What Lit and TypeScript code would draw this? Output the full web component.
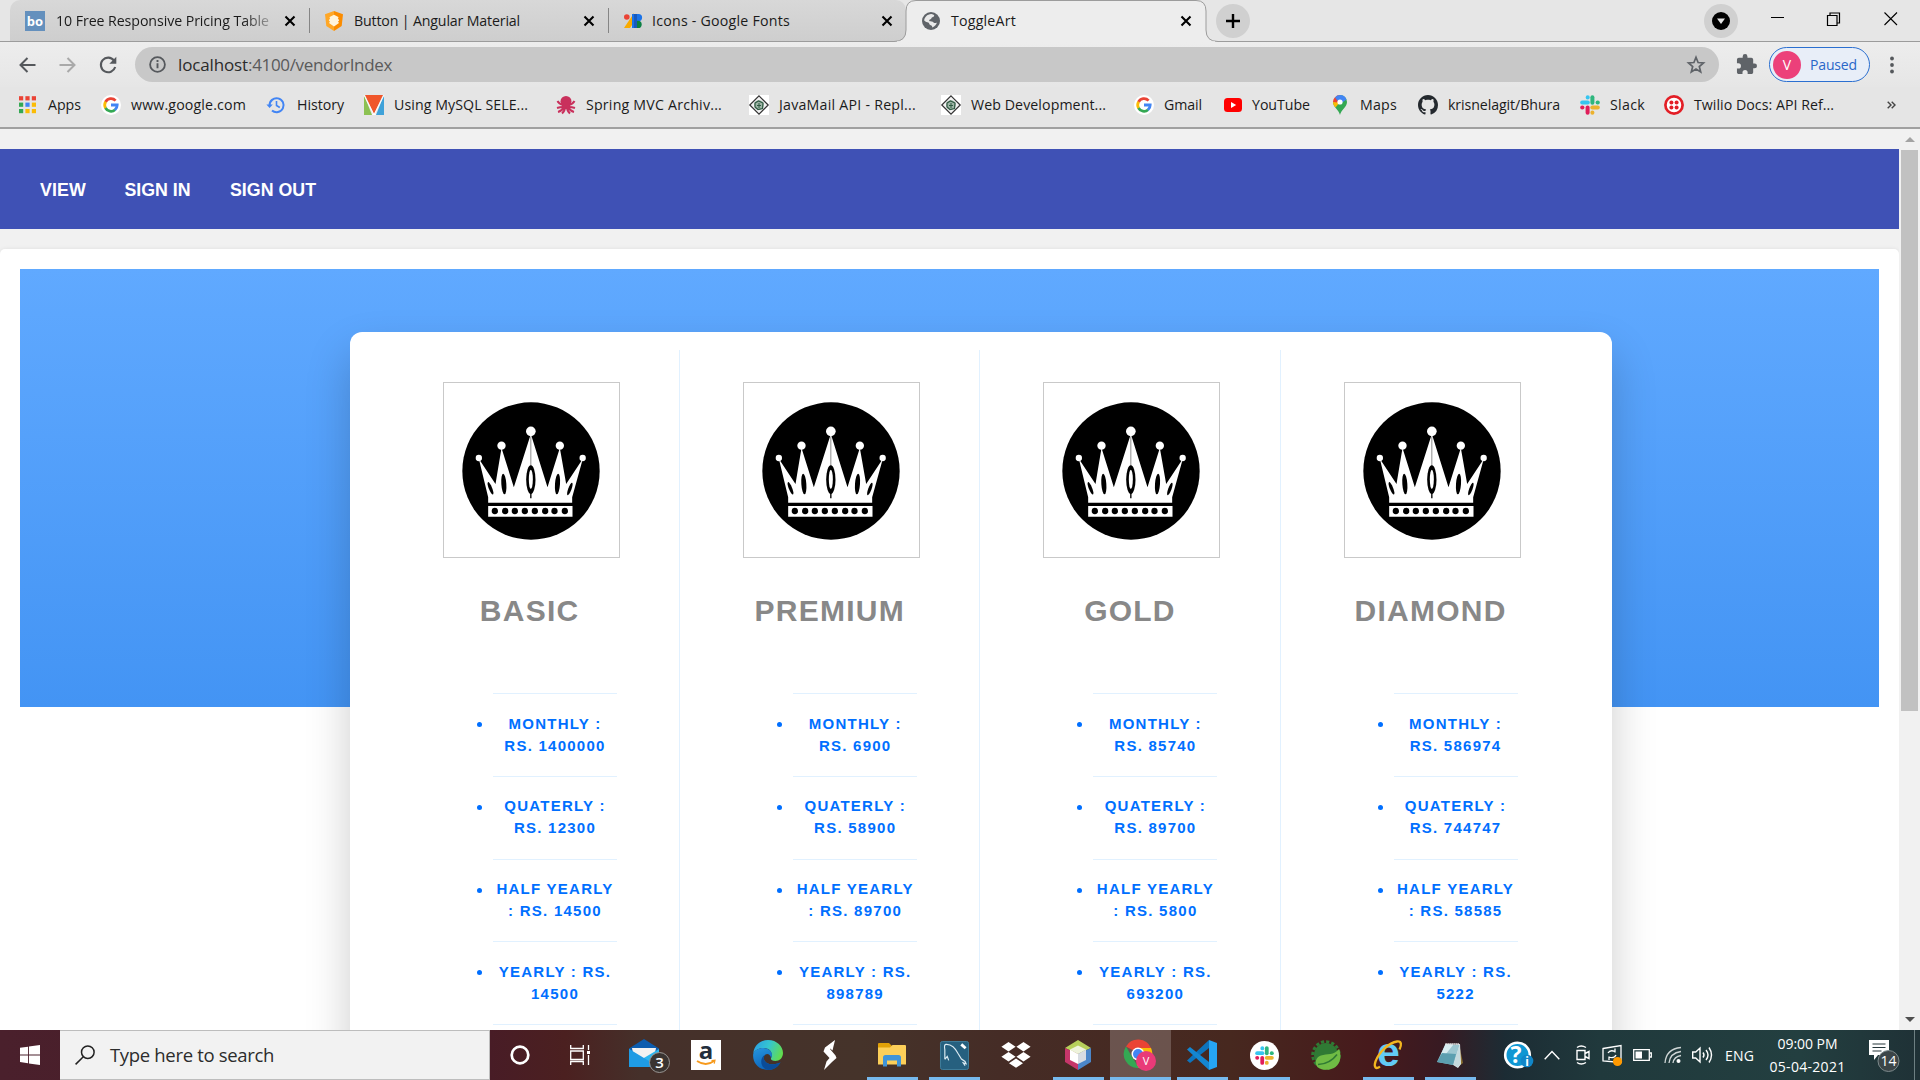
import { LitElement, html, svg, css, TemplateResult } from "lit";
import { customElement } from "lit/decorators.js";
import { styleMap } from "lit/directives/style-map.js";

interface Cell {
  x: number;
  body: TemplateResult;
  cls?: string;
}

interface Plan {
  name: string;
  monthly: string;
  quarterly: string;
  half: string;
  yearly: string;
}

const plans: Plan[] = [
  { name: "BASIC", monthly: "1400000", quarterly: "12300", half: "14500", yearly: "14500" },
  { name: "PREMIUM", monthly: "6900", quarterly: "58900", half: "89700", yearly: "898789" },
  { name: "GOLD", monthly: "85740", quarterly: "89700", half: "5800", yearly: "693200" },
  { name: "DIAMOND", monthly: "586974", quarterly: "744747", half: "58585", yearly: "5222" },
];

const icon = (w: number, h: number, box: string, body: TemplateResult) =>
  html`<svg class="icon" width=${w} height=${h} viewBox=${box}>${body}</svg>`;

/* A label whose tracking is adjusted so that it spans exactly w pixels. */
const label = (text: string, w: number, cls = "") =>
  html`<span class="fit ${cls}" data-w=${w}>${text}</span>`;

/* Lays cells out one after the other; each one is as wide as the distance to the next. */
const row = (cells: Cell[], end: number) =>
  cells.map((c, i) => {
    const next = i + 1 < cells.length ? cells[i + 1].x : end;
    return html`<div class="cell ${c.cls ?? ""}" style=${styleMap({ width: `${next - c.x}px` })}>${c.body}</div>`;
  });

const googleG = icon(20, 20, "0 0 20 20", svg`
  <circle cx="10" cy="10" r="10" fill="#fff"/>
  <g fill="none" stroke-width="2.800">
    <path d="M14.600 5.600A6.300 6.300 0 0 0 4.500 7" stroke="#ea4335"/>
    <path d="M4.600 6.800a6.300 6.300 0 0 0 0 6.400" stroke="#fbbc05"/>
    <path d="M4.500 13a6.300 6.300 0 0 0 9.600 1.800" stroke="#34a853"/>
    <path d="M13.900 14.900A6.300 6.300 0 0 0 16.200 10H10" stroke="#4285f4"/>
  </g>`);

const bo = icon(20, 20, "0 0 20 20", svg`
  <rect width="20" height="20" fill="#6490bd"/>
  <text x="10" y="15" text-anchor="middle" font-family="Open Sans, sans-serif" font-weight="700" font-size="13" fill="#fff">bo</text>`);

const angular = icon(20, 20, "0 0 20 20", svg`
  <path d="M10 0 1 3.200 2.300 15 10 20z" fill="#ffa726"/><path d="M10 0l9 3.200L17.700 15 10 20z" fill="#fb8c00"/>
  <path d="M10 3.800l4.800 2.400-1 .9 1.400 2.400-1.200 1.100 1 1.500-5 3.400-5-3.400 1-1.500-1.200-1.100 1.400-2.400-1-.9z" fill="#fff4dc"/>`);

const fonts = icon(20, 20, "0 0 20 20", svg`
  <path d="M11 2 1 17h6l4-6z" fill="#f9ab00"/><path d="M9 3h5v14H9z" fill="#1a73e8"/>
  <circle cx="3.800" cy="6" r="2.800" fill="#ea4335"/>
  <path d="M13 3h2.500a3.600 3.600 0 0 1 0 7.200H13z" fill="#1a73e8"/><circle cx="15" cy="13.400" r="3.700" fill="#0d8043"/>
  <path d="M11 3h3v14h-3z" fill="#185abc"/>`);

const globe = icon(20, 20, "0 0 20 20", svg`
  <circle cx="10" cy="10" r="9" fill="#5f6368"/>
  <path d="M10.400 3.100c2.700.4 3.400 1.500 2.400 2.500-1 1-2.200.6-2.500 1.800-.2 1.200-1.300.5-2 1.600-.6 1.200.8 1.400 2.300 1.400 1.900 0 1.800 1.200 2.800 1.600 1 .4 1.600-.6 2.400-.2-.3 1.600-1.800 3.800-4.600 4.700.3-1.600-.7-1.800-1.900-2.400-1.300-.7-.8-2.200-2-2.600C6 11 5 11.400 3.200 9.500 3.400 6.500 6 3.400 10.400 3.100z" fill="#e9e9e9"/>`);

const cross = icon(12, 12, "0 0 12 12", svg`<path d="M1.500 1.500l9 9m0-9l-9 9" stroke="#000" stroke-width="2.100"/>`);

const apps = icon(18, 18, "0 0 18 18", svg`${[0, 1, 2, 3, 4, 5, 6, 7, 8].map((i) => {
  const colors = ["#ea4335", "#ea4335", "#ea4335", "#34a853", "#4285f4", "#fbbc05", "#34a853", "#fbbc05", "#fbbc05"];
  return svg`<rect x=${(i % 3) * 6.4} y=${Math.floor(i / 3) * 6.4 + 0.2} width="4.200" height="4.200" fill=${colors[i]}/>`;
})}`);

const history = icon(20, 20, "0 0 20 20", svg`
  <path d="M3.600 10.500A7 7 0 1 1 6 15.500" fill="none" stroke="#4285f4" stroke-width="2"/>
  <path d="M.4 9.500h6.400l-3.200 3.600z" fill="#4285f4"/><path d="M10.500 6v4.500l3.300 2" fill="none" stroke="#4285f4" stroke-width="1.600"/>`);

const vlogo = icon(20, 20, "0 0 20 20", svg`
  <path d="M0 0l8 20H0z" fill="#8cc152"/><path d="M20 0l-8 20h8z" fill="#3fa2d9"/>
  <path d="M8 20h4l-2-4z" fill="#fff"/><path d="M1 0h18l-9 19z" fill="#f0562b"/><path d="M0 0l10 20L20 0" stroke="#fff" fill="none"/>`);

const octopus = icon(20, 20, "0 0 20 20", svg`
  <ellipse cx="10" cy="6.500" rx="5.500" ry="5.500" fill="#c9305c"/><path d="M6 8h8v6H6z" fill="#c9305c"/>
  <g stroke="#c9305c" stroke-width="2" fill="none">
  <path d="M7 10Q3 9 1.500 6M13 10q4-1 5.500-4M7 12q-3 0-6 1M13 12q3 0 6 1M8 12q-2 4-6 5M12 12q2 4 6 5M9 12q0 4-3 6.500M11 12q0 4 3 6.500"/></g>`);

const diamond = icon(20, 20, "0 0 20 20", svg`
  <rect width="20" height="20" fill="#fff"/><path d="M10 .8L19.200 10 10 19.200.8 10z" fill="#f4f4f4" stroke="#333" stroke-width="1.200"/>
  <circle cx="10" cy="10" r="4.800" fill="#9db5a6"/><path d="M6 8l3.500-2 4.500 2-.5 5.500-4.500 1L6 12z" fill="none" stroke="#2f5a42" stroke-width="1.200"/><path d="M8 10.500h4M10 8v5" stroke="#2f5a42"/>`);

const youtube = icon(20, 20, "0 0 20 20", svg`<rect x="1" y="3" width="18" height="14" rx="3.500" fill="#f00"/><path d="M8 7l5.200 3L8 13z" fill="#fff"/>`);

const maps = icon(16, 20, "0 0 16 20", svg`
  <path d="M8 20C7 15 1 12 1 7l7-7a7 7 0 0 1 7 7c0 5-6 8-7 13z" fill="#34a853"/>
  <path d="M1 7.500 3 2.500 8 7 3.500 12.500Q1 10 1 7.500z" fill="#fbbc04"/>
  <path d="M2.800 2.400A7 7 0 0 1 8 0L5.500 7.500 1 7Q1 4 2.800 2.400z" fill="#ea4335"/>
  <path d="M8 0a7 7 0 0 1 6.500 4.400L8 9 3 2.400Q5 0 8 0z" fill="#4285f4"/><circle cx="8" cy="7" r="2.600" fill="#fff"/>`);

const github = icon(20, 20, "0 0 16 16", svg`
  <path fill="#24292e" d="M8 0C3.580 0 0 3.580 0 8c0 3.540 2.290 6.530 5.470 7.590.4.070.55-.17.55-.38 0-.19-.01-.82-.01-1.490-2.010.37-2.530-.49-2.690-.94-.09-.23-.48-.94-.82-1.130-.28-.15-.68-.52-.01-.53.63-.01 1.080.58 1.230.82.72 1.210 1.870.87 2.330.66.07-.52.28-.87.51-1.070-1.780-.2-3.640-.89-3.640-3.950 0-.87.31-1.590.82-2.150-.08-.2-.36-1.020.08-2.120 0 0 .67-.21 2.200.82.64-.18 1.320-.27 2-.27s1.360.09 2 .27c1.530-1.040 2.200-.82 2.200-.82.44 1.100.16 1.920.08 2.120.51.56.82 1.270.82 2.150 0 3.070-1.870 3.750-3.650 3.950.29.25.54.73.54 1.480 0 1.070-.01 1.930-.01 2.200 0 .21.15.46.55.38A8.010 8.010 0 0 0 16 8c0-4.420-3.580-8-8-8z"/>`);

const slackShape = svg`
  <g stroke-width="4" stroke-linecap="round" fill="none">
    <path d="M2.200 7.500h5.600" stroke="#36c5f0"/><path d="M7.700 2.200v.3" stroke="#36c5f0"/>
    <path d="M12.400 2.200v5.500" stroke="#2eb67d"/><path d="M17.600 7.600h.2" stroke="#2eb67d"/>
    <path d="M12.300 12.400h5.500" stroke="#ecb22e"/><path d="M12.400 17.600v.2" stroke="#ecb22e"/>
    <path d="M7.600 12.400v5.400" stroke="#e01e5a"/><path d="M2.200 12.400h.2" stroke="#e01e5a"/>
  </g>`;
const slack = icon(20, 20, "0 0 20 20", slackShape);

const twilio = icon(20, 20, "0 0 20 20", svg`
  <circle cx="10" cy="10" r="8.600" fill="#fff" stroke="#e31e26" stroke-width="2.700"/>
  <g fill="#e31e26"><circle cx="7.400" cy="7.400" r="2"/><circle cx="12.600" cy="7.400" r="2"/><circle cx="7.400" cy="12.600" r="2"/><circle cx="12.600" cy="12.600" r="2"/></g>`);

const crown = html`<svg class="crown" viewBox="313 189 524 522">
  <circle cx="573.500" cy="453" r="206"/>
  <g fill="#fff">
    <circle cx="573" cy="334" r="14.500"/><circle cx="485" cy="377" r="12.500"/><circle cx="660" cy="377" r="12.500"/>
    <circle cx="417" cy="414" r="9.500"/><circle cx="728.500" cy="414" r="9.500"/>
    <path d="M445 548v-16L417 416l50 76 18-108 37 118 51-160 50 160 37-118 19 108 50-76-32 116v16z"/>
    <path d="M445 558h253v32H445z"/>
  </g>
  ${[465, 496, 525, 555, 585, 616, 644, 675].map((x) => svg`<circle cx=${x} cy="573" r="9.500"/>`)}
  <path d="M573 350v90" stroke="#555" stroke-width="2"/><path d="M573 515v20" stroke="#000" stroke-width="4"/>
  <ellipse cx="573" cy="479" rx="14" ry="43"/><ellipse cx="573" cy="478" rx="6" ry="29" fill="#fff"/>
  <ellipse cx="492" cy="492" rx="7.500" ry="31" transform="rotate(-4 492 492)"/>
  <ellipse cx="653" cy="492" rx="7.500" ry="31" transform="rotate(4 653 492)"/>
  <ellipse cx="452" cy="505" rx="5" ry="20" transform="rotate(-22 452 505)"/>
  <ellipse cx="690" cy="507" rx="5" ry="20" transform="rotate(20 690 507)"/>
</svg>`;

/* Taskbar icons */
const mail = icon(42, 34, "0 0 42 34", svg`
  <path d="M0 10.500 15 1l15 9.500V17H0z" fill="#0c5cae"/><path d="M3 10h24l-2 10H5z" fill="#f2f2f2"/>
  <path d="M0 11l14 9.500 16-9.500v18H0z" fill="#2bb6f0"/><path d="M0 11l30 18H0z" fill="#1f9be4"/>
  <circle cx="30.500" cy="24.500" r="10" fill="#3a3431" stroke="#9a9794"/>
  <text x="30.500" y="30" text-anchor="middle" font-size="15" font-weight="600" font-family="Open Sans, sans-serif" fill="#fff">3</text>`);
const amazon = icon(30, 30, "0 0 30 30", svg`
  <rect width="30" height="30" fill="#fff"/>
  <text x="15" y="19" text-anchor="middle" font-size="24" font-weight="700" font-family="Open Sans, sans-serif" fill="#232f3e">a</text>
  <path d="M6 21q9 6 17 0" fill="none" stroke="#f79a1c" stroke-width="1.800"/><path d="M20.500 20.700l3.500-.4-.8 3.400" fill="none" stroke="#f79a1c" stroke-width="1.200"/>`);
const edge = icon(30, 30, "0 0 30 30", svg`
  <defs>
    <linearGradient id="eg" x1="0" x2="1" y1=".2" y2=".5"><stop offset="0" stop-color="#2a9fe6"/><stop offset=".5" stop-color="#35c6cf"/><stop offset="1" stop-color="#62dc4f"/></linearGradient>
    <linearGradient id="eb" x1="0" x2=".5" y1="0" y2="1"><stop offset="0" stop-color="#2596e0"/><stop offset="1" stop-color="#0c62b8"/></linearGradient>
  </defs>
  <path d="M.3 13.500C1 5 7.500 0 15 0c9 0 15 6.500 15 13 0 5-3.600 8-7.500 8-3.600 0-5.300-1.300-4.400-3C20.500 12 16 8 10.500 8 5.500 8 1.500 10.500.3 13.500z" fill="url(#eg)"/>
  <path d="M.2 14C1 10.500 5.500 8 10.500 8 15 8 19 11 19 15c0 1.200-.4 2.400-1 3-.6-3.600-3.500-4.800-5.500-3.500-3 2-2.500 8.500 5.500 9.700 3 .4 6-.2 9.500-1.700A15 15 0 0 1 15 30C6 30-.8 23 .2 14z" fill="url(#eb)"/>
  <path d="M12.500 14.500c-3 2-2.500 8.500 5.500 9.700 3 .4 6-.2 9.500-1.700-2.500 4.500-7 7.500-12.500 7.500-8-2-9-12-2.500-15.500z" fill="#0b4c98"/>`);
const sIcon = icon(14, 30, "0 0 14 30", svg`<path fill="#fff" d="M12 0L9.500 10.500 6 7.500z"/><path fill="#fff" d="M12 0L2 7.500.5 11.500l6 6.500-3 3.500L1 30l8-8 4.500-4-1-2.500L7 9z"/>`);
const explorer = icon(28, 24, "0 0 28 24", svg`
  <path d="M0 1q0-1 1-1h10l3 3v4H0z" fill="#e0a008"/><path d="M0 4.500l12 0 2.500-2.500H27q1 0 1 1v18.500H0z" fill="#fccf59"/>
  <path d="M5 23.500V14.500q0-2.500 2.500-2.500h13q2.500 0 2.500 2.500v9h-4v-6H9v6z" fill="#3f94d8"/>`);
const mysql = icon(29, 29, "0 0 30 30", svg`
  <rect x=".5" y=".5" width="29" height="29" rx="2" fill="#26607f" stroke="#3f7f9e"/>
  <path d="M5 19V9Q4 4 6 3.500c6-.5 10 4 13 10l3 5q4 2 5 5l-3-1 2 3M5 19l2.500-3 1.500 4" fill="none" stroke="#dcebf2" stroke-width="1.200"/><path d="M22 3.500l4.500 4" stroke="#fff" stroke-width="3"/>`);
const dropbox = icon(30, 26, "0 0 30 26", svg`<path fill="#fff" d="M7.500 0L14.600 4.700 7.500 9.400.4 4.700zM22.500 0l7.100 4.700-7.100 4.700-7.100-4.700zM7.500 10l7.100 4.700-7.100 4.700-7.100-4.700zM22.500 10l7.100 4.700-7.100 4.700-7.100-4.700zM15 16.500l7 4.700-7 4.600-7-4.600z"/>`);
const netbeans = icon(28, 30, "0 0 28 30", svg`
  <path d="M14 0l13 8-13 6L1 8z" fill="#b6cf5b"/><path d="M1 8l13 6v16L1 22z" fill="#c6366a"/><path d="M27 8l-13 6v16l13-8z" fill="#4b86c9"/>
  <path d="M14 5.500l8 4-8 4.500-8-4.500z" fill="#eef3dc"/><path d="M6 9.500l8 4.500v10l-8-4z" fill="#fff"/><path d="M22 9.500L14 14v10l8-4z" fill="#d8dce2"/>`);
const chrome = icon(32, 32, "0 0 32 32", svg`
  <path d="M14 14L2 7.500A14 14 0 0 1 27 9H14z" fill="#ea4335"/><path d="M14 14H28A14 14 0 0 1 13 29z" fill="#fbbc05"/><path d="M27 9H14v8l14 3q1-7-1-11z" fill="#fbbc05"/>
  <path d="M2 7.500l7 12 6 9.500A14 14 0 0 1 2 7.500z" fill="#34a853"/>
  <circle cx="14" cy="15" r="6.500" fill="#fff"/><circle cx="14" cy="15" r="5" fill="#4285f4"/>
  <circle cx="22" cy="22" r="10" fill="#e93a78"/><text x="22" y="26" font-size="11" text-anchor="middle" font-family="Open Sans, sans-serif" fill="#fff">V</text>`);
const vscode = icon(30, 30, "0 0 30 30", svg`
  <path d="M22 0l8 3v24l-8 3z" fill="#26a5f3"/><path d="M22 0v8L3 23 0 20.500z" fill="#0d74bd"/><path d="M22 30v-8L3 7 0 9.500z" fill="#1486d1"/>`);
const slackApp = icon(29, 29, "-5 -5 30 30", svg`<circle cx="10" cy="10" r="15" fill="#fff"/><g transform="translate(.2 .2) scale(.98)">${slackShape}</g>`);
const leaf = icon(30, 30, "0 0 30 30", svg`
  <circle cx="15" cy="15" r="12" fill="#2f7a34"/><circle cx="15" cy="15" r="13.300" fill="none" stroke="#2f7a34" stroke-width="3" stroke-dasharray="3.200 2"/>
  <path d="M28 9c2.500 6 2 14-3.500 18-5 3.500-13 4-18 0C3 23 5 17 10 15.500c6-2 13 0 18-6.500z" fill="#6fbb44"/><path d="M7 24.500q12-.5 19-10" stroke="#2f7a34" fill="none" stroke-width="1.600"/>`);
const ie = icon(30, 30, "0 0 30 30", svg`
  <text x="15.500" y="26" text-anchor="middle" font-family="Liberation Sans, Arial, sans-serif" font-weight="700" font-size="41" fill="#62cbf5">e</text>
  <path d="M7 26.500C3 30 .5 27 2.500 21.500 6 12 16 2.500 24 1.500c5-.6 4.500 4 2.500 8" fill="none" stroke="#f3b61f" stroke-width="2.300"/>`);
const notepad = icon(28, 28, "0 0 28 28", svg`
  <path d="M23 3l4 19-4 3z" fill="#8a6d2f"/><path d="M18 4l6-1 1 20-3 4-8-5z" fill="#e3ecee"/>
  <path d="M9.500 3l14 1-6 20L1 21z" fill="#9cc6d0"/><path d="M9.500 3l8 .6-8 10L5 13z" fill="#d8edf1"/><path d="M6 12l14 1-3 11L1 21z" fill="#5c9fb0"/>
  <path d="M23.500 4l1 19-3 3.500-4-3z" fill="#c5dade"/><path d="M9.500 3h14" stroke="#e8e8e8" stroke-width="2" stroke-dasharray="1.200 .8"/>`);
const help = icon(30, 30, "0 0 30 30", svg`
  <circle cx="13.500" cy="15" r="12.300" fill="#0f97d3" stroke="#fff" stroke-width="2.600"/>
  <text x="12" y="23" text-anchor="middle" font-family="Open Sans, sans-serif" font-weight="700" font-size="23" fill="#fff">?</text>
  <circle cx="23" cy="21" r="6.300" fill="#1186c8"/><text x="23" y="25.500" text-anchor="middle" font-family="Open Sans, sans-serif" font-weight="700" font-size="12" fill="#fff">i</text>`);

const ring = icon(20, 20, "0 0 20 20", svg`<circle cx="10" cy="10" r="8.300" fill="none" stroke="#fff" stroke-width="2.700"/>`);
const taskview = icon(20, 20, "0 0 20 20", svg`<g fill="none" stroke="#fff" stroke-width="1.300"><path d="M.7 0v3.500h12.600V0M.7 6h12.600v8.500H.7zM.7 20v-3.500h12.600V20M18.500 0v5M18.500 10v10"/></g><path d="M17 6h3v3h-3z" fill="#fff"/>`);
const winlogo = icon(20, 20, "0 0 20 20", svg`<path fill="#fff" d="M0 2.800L8 1.700v7.700H0zM8.900 1.500L20 0v9.400H8.900zM0 10.400h8v7.800l-8-1.100zM8.900 10.400H20V20L8.900 18.400z"/>`);
const magnifier = icon(20, 20, "0 0 20 20", svg`<g fill="none" stroke="#222" stroke-width="1.500"><circle cx="12.800" cy="7.200" r="6.300"/><path d="M8.300 11.700L.6 19.400"/></g>`);
const line = (w: number, h: number, d: string) => icon(w, h, `0 0 ${w} ${h}`, svg`<path d=${d} fill="none" stroke="#fff" stroke-width="1.400"/>`);

@customElement("app-root")
export class AppRoot extends LitElement {
  static styles = css`
    :host { display: block; width: 1920px; height: 1080px; overflow: hidden; font-family: "Open Sans", "Noto Sans", sans-serif; color: #1b1b1b; }
    * { box-sizing: border-box; }
    .screen { display: flex; flex-direction: column; height: 1080px; }
    .icon { display: block; flex: none; overflow: visible; }
    .fit { display: inline-block; white-space: pre; }
    .cell { display: flex; align-items: center; flex: none; height: 100%; }
    .top { height: 129px; border-bottom: 2px solid #a0a0a0; background: #e5e5e5; flex: none; }
    .tabs { height: 42px; display: flex; background: #e6e6e6; border-bottom: 1px solid #9c9c9c; font-size: 14.200px; position: relative; z-index: 0; }
    .tabs .cell { height: 41px; }
    .tab { background: linear-gradient(#d8d8d8, #cecece); }
    .first { border-radius: 10px 0 0 0; }
    .last { border-radius: 0 10px 0 0; }
    .sep { border-left: 1px solid #858585; height: 25px; width: 1px; }
    .active { position: relative; }
    .shape { position: absolute; left: -12px; top: 0; }
    .front { position: relative; }
    .round { width: 34px; height: 34px; border-radius: 50%; background: #d0d0d0; display: grid; place-items: center; }
    .fade { -webkit-mask-image: linear-gradient(90deg, #000 88%, rgba(0, 0, 0, .3)); mask-image: linear-gradient(90deg, #000 88%, rgba(0, 0, 0, .3)); }
    .tools { height: 45px; display: flex; background: linear-gradient(#ededed, #e6e6e6); }
    .omni { height: 35px; margin-top: 5px; width: 1584px; border-radius: 18px; background: #c8c8c8; display: flex; align-items: center; font-size: 17px; color: #5a5a5a; padding-left: 14px; }
    .omni .host { color: #2b2b2b; }
    .url { display: flex; margin-left: 12px; flex: 1; }
    .pill { height: 35px; width: 101px; border: 1.500px solid #2b6fd0; border-radius: 18px; background: #e8eef8; display: flex; align-items: center; padding-left: 3px; font-size: 14px; color: #2a66c8; gap: 9px; }
    .avatar { width: 28px; height: 28px; border-radius: 50%; background: #ec407a; color: #fff; display: grid; place-items: center; font-size: 14px; }
    .marks { height: 40px; display: flex; font-size: 14.200px; padding-bottom: 4px; }
    .marks .fit { margin-top: -2px; }
    .view { height: 901px; flex: none; display: flex; overflow: hidden; }
    .page { width: 1899px; background: #f1f1f1; font-family: "Liberation Sans", Arial, sans-serif; padding-top: 20px; flex: none; }
    .nav { height: 80px; background: #3f51b5; display: flex; color: #fff; font-weight: 700; font-size: 17.800px; padding: 2px 0 0 40px; }
    .sheet { margin-top: 20px; height: 900px; background: #fff; border-radius: 5px; padding: 20px; box-shadow: 0 0 4px rgba(0, 0, 0, .08); }
    .hero { height: 438px; background: linear-gradient(#60a9ff, #4394f4); padding: 63px 0 0 330px; }
    .card { width: 1262px; height: 900px; border-radius: 12px; background: #fff; box-shadow: 0 22px 46px rgba(0, 0, 0, .2); padding: 18px 30px; display: flex; }
    .plan { flex: 0 0 300.200px; border-right: 1px solid #e1f1ff; display: flex; flex-direction: column; }
    .plan:last-child { border-right: 0; }
    .frame { margin: 32px 0 0 63px; width: 177px; height: 176px; border: 1px solid #c9c9c9; flex: none; }
    .crown { display: block; width: 175px; height: 174px; }
    .title { margin: 34px 0 0; height: 38px; line-height: 38px; text-align: center; font-size: 30px; font-weight: 700; letter-spacing: 1.250px; color: #888; }
    .list { margin: 63px 0 0 113px; padding: 0; width: 124px; border-top: 1px solid #e1f1ff; }
    .price { height: 82.750px; border-bottom: 1px solid #e1f1ff; padding-top: 18.500px; font-size: 15px; line-height: 22px; font-weight: 700; letter-spacing: 1.250px; text-align: center; color: #006fff; position: relative; list-style: none; }
    .price::before { content: ""; position: absolute; left: -16px; top: 28px; width: 5px; height: 5px; border-radius: 50%; background: #006fff; }
    .scroll { width: 21px; background: #f1f1f1; display: flex; flex-direction: column; align-items: center; justify-content: space-between; }
    .thumb { width: 17px; height: 561px; background: #c1c1c1; }
    .scroll .gap { flex: 1; }
    .up { height: 21px; display: grid; place-items: center; }
    .task { height: 50px; flex: none; display: flex; color: #fff;
      background: linear-gradient(90deg, #4a202c 0, #481c26 490px, #4b2020 565px, #45302a 640px, #45332a 860px, #452c26 1000px, #47281f 1230px, #471a1c 1370px, #381a22 1440px, #1c2c34 1505px, #20393c 1600px, #233f40 1800px, #1f3136 1920px); }
    .search { background: #f2f2f2; border: 1px solid #bdbdbd; border-width: 1px 1px 1px 0; color: #2c2c2c; font-size: 18.500px; padding-left: 15px; gap: 15px; }
    .search .fit { margin-top: -2px; }
    .app { justify-content: center; border-bottom: 3px solid transparent; padding: 3px 1px 0 0; }
    .run { border-bottom-color: #76b9ed; }
    .hot { background-color: rgba(255, 255, 255, .2); }
    .clock { flex-direction: column; justify-content: center; font-size: 14px; line-height: 23px; }
    .tray { font-size: 14px; }
    .edge { border-left: 1px solid #6d7f82; }
  `;

  protected firstUpdated() {
    this.renderRoot.querySelectorAll<HTMLElement>(".fit").forEach((el) => {
      const target = Number(el.dataset.w);
      const natural = el.getBoundingClientRect().width;
      el.style.letterSpacing = `${(target - natural) / (el.textContent ?? " ").length}px`;
    });
  }

  private tabs() {
    const t = "tab";
    return html`<div class="tabs">${row([
      { x: 0, body: html`` },
      { x: 10, cls: "tab first", body: html`` },
      { x: 25, cls: t, body: bo },
      { x: 56, cls: t, body: label("10 Free Responsive Pricing Table", 213, "fade") },
      { x: 284, cls: t, body: cross },
      { x: 309, cls: t, body: html`<div class="sep"></div>` },
      { x: 324, cls: t, body: angular },
      { x: 354, cls: t, body: label("Button | Angular Material", 166) },
      { x: 583, cls: t, body: cross },
      { x: 608, cls: t, body: html`<div class="sep"></div>` },
      { x: 623, cls: t, body: fonts },
      { x: 652, cls: t, body: label("Icons - Google Fonts", 138) },
      { x: 881, cls: "tab last", body: cross },
      { x: 906, cls: "active", body: html`<svg class="shape" width="324" height="42"><path d="M0 42.500V41.500Q12 41.500 12 30V11Q12 .5 22 .5H302Q312 .5 312 11V30Q312 41.500 324 41.500V43z" fill="#ededed" stroke="#9c9c9c"/><path d="M3 42h318" stroke="#ededed" stroke-width="1.500"/></svg>` },
      { x: 921, cls: "front", body: globe },
      { x: 951, cls: "front", body: label("ToggleArt", 65) },
      { x: 1180, cls: "front", body: cross },
      { x: 1216, cls: "front", body: html`<div class="round">${icon(16, 16, "0 0 16 16", svg`<path d="M8 1v14M1 8h14" stroke="#000" stroke-width="2.400"/>`)}</div>` },
      { x: 1704, body: html`<div class="round">${icon(18, 18, "0 0 18 18", svg`<circle cx="9" cy="9" r="9"/><path d="M5 6.500h8L9 12z" fill="#e6e6e6"/>`)}</div>` },
      { x: 1771, body: icon(13, 8, "0 0 13 8", svg`<path d="M0 .5h13" stroke="#000"/>`) },
      { x: 1827, body: icon(13, 18, "0 0 13 18", svg`<path d="M.5 3.500h9.500v10H.500zM3 3.500V1h9.500v10H10" fill="none" stroke="#000" stroke-width="1.200"/>`) },
      { x: 1884, body: icon(14, 18, "0 0 14 18", svg`<path d="M.5 .5l12.500 12.500M13 .5L.5 13" fill="none" stroke="#000" stroke-width="1.100"/>`) },
    ], 1920)}</div>`;
  }

  private tools() {
    const arrow = (c: string, flip: boolean) => icon(17, 16, "0 0 17 16", svg`<path transform=${flip ? "translate(17 0) scale(-1 1)" : ""} d="M16.500 8H1.600M8.500 1L1.500 8l7 7" fill="none" stroke=${c} stroke-width="2"/>`);
    return html`<div class="tools">${row([
      { x: 0, body: html`` },
      { x: 19, body: arrow("#55585c", false) },
      { x: 59, body: arrow("#a9a9a9", true) },
      { x: 99, body: icon(18, 18, "0 0 18 18", svg`<path d="M15 4.500A7.300 7.300 0 1 0 16.200 11" fill="none" stroke="#55585c" stroke-width="2.100"/><path d="M17.300.8v7h-7z" fill="#55585c"/>`) },
    ], 135)}
      <div class="omni">
        ${icon(17, 17, "0 0 17 17", svg`<circle cx="8.500" cy="8.500" r="7.400" fill="none" stroke="#55585c" stroke-width="1.800"/><path d="M8.500 7.300v5M8.500 4v2" stroke="#55585c" stroke-width="1.900"/>`)}
        <div class="url">${label("localhost", 70, "host")}${label(":4100/vendorIndex", 144)}</div>
        ${icon(37, 20, "0 0 37 20", svg`<path d="M14 2.300l2.100 5.200 5.400.4-4.200 3.600 1.400 5.500-4.700-3-4.700 3 1.400-5.500-4.200-3.600 5.400-.4z" fill="none" stroke="#5f6368" stroke-width="1.700"/>`)}
      </div>
      ${row([
        { x: 1719, body: html`` },
        { x: 1736, body: icon(21, 21, "1 1 22 22", svg`<path fill="#5f6368" d="M20.500 11H19V7c0-1.100-.9-2-2-2h-4V3.500a2.500 2.500 0 0 0-5 0V5H4c-1.100 0-2 .9-2 2v3.800h1.500a2.700 2.700 0 0 1 0 5.400H2V20c0 1.100.9 2 2 2h3.800v-1.500a2.700 2.700 0 0 1 5.400 0V22H17c1.100 0 2-.9 2-2v-4h1.500a2.500 2.500 0 0 0 0-5z"/>`) },
        { x: 1769, body: html`<div class="pill"><div class="avatar">V</div>${label("Paused", 47)}</div>` },
        { x: 1890, body: icon(4, 18, "0 0 4 18", svg`<g fill="#55585c"><circle cx="2" cy="2.500" r="1.900"/><circle cx="2" cy="9" r="1.900"/><circle cx="2" cy="15.500" r="1.900"/></g>`) },
      ], 1920)}
    </div>`;
  }

  private bookmarks() {
    return html`<div class="marks">${row([
      { x: 0, body: html`` },
      { x: 19, body: apps }, { x: 48, body: label("Apps", 33) },
      { x: 101, body: googleG }, { x: 131, body: label("www.google.com", 115) },
      { x: 266, body: history }, { x: 297, body: label("History", 47) },
      { x: 364, body: vlogo }, { x: 394, body: label("Using MySQL SELE...", 134) },
      { x: 556, body: octopus }, { x: 586, body: label("Spring MVC Archiv...", 136) },
      { x: 749, body: diamond }, { x: 779, body: label("JavaMail API - Repl...", 137) },
      { x: 941, body: diamond }, { x: 971, body: label("Web Development...", 135) },
      { x: 1134, body: googleG }, { x: 1164, body: label("Gmail", 38) },
      { x: 1223, body: youtube }, { x: 1252, body: label("YouTube", 58) },
      { x: 1332, body: maps }, { x: 1360, body: label("Maps", 37) },
      { x: 1418, body: github }, { x: 1448, body: label("krisnelagit/Bhura", 112) },
      { x: 1580, body: slack }, { x: 1610, body: label("Slack", 35) },
      { x: 1664, body: twilio }, { x: 1694, body: label("Twilio Docs: API Ref...", 140) },
      { x: 1887, body: icon(9, 8, "0 0 9 8", svg`<path d="M.7.7L4 4 .7 7.300M4.700.7L8 4 4.700 7.300" fill="none" stroke="#444" stroke-width="1.400"/>`) },
    ], 1920)}</div>`;
  }

  private plan(p: Plan) {
    const prices = [["MONTHLY", p.monthly], ["QUATERLY", p.quarterly], ["HALF YEARLY", p.half], ["YEARLY", p.yearly]];
    return html`<section class="plan">
      <div class="frame">${crown}</div>
      <h2 class="title">${p.name}</h2>
      <ul class="list">${prices.map(([k, v]) => html`<li class="price">${`${k} : RS. ${v}`}</li>`)}</ul>
    </section>`;
  }

  private taskbar() {
    return html`<div class="task">${row([
      { x: 0, cls: "app", body: winlogo },
      { x: 60, cls: "search", body: html`${magnifier}${label("Type here to search", 164)}` },
      { x: 490, cls: "app", body: ring },
      { x: 550, cls: "app", body: taskview },
      { x: 610, body: html`` },
      { x: 629, body: mail },
      { x: 680, cls: "app", body: amazon },
      { x: 732, body: html`` },
      { x: 742, cls: "app", body: edge },
      { x: 794, body: html`` },
      { x: 804, cls: "app", body: sIcon },
      { x: 856, body: html`` },
      { x: 867, cls: "app run", body: explorer },
      { x: 918, body: html`` },
      { x: 929, cls: "app run", body: mysql },
      { x: 980, body: html`` },
      { x: 991, cls: "app", body: dropbox },
      { x: 1042, body: html`` },
      { x: 1053, cls: "app run", body: netbeans },
      { x: 1104, body: html`` },
      { x: 1110, cls: "app run hot", body: chrome },
      { x: 1171, body: html`` },
      { x: 1177, cls: "app run", body: vscode },
      { x: 1228, body: html`` },
      { x: 1239, cls: "app run", body: slackApp },
      { x: 1290, body: html`` },
      { x: 1301, cls: "app", body: leaf },
      { x: 1352, body: html`` },
      { x: 1363, cls: "app run", body: ie },
      { x: 1414, body: html`` },
      { x: 1425, cls: "app run", body: notepad },
      { x: 1476, body: html`` },
      { x: 1504, body: help },
      { x: 1544, body: line(16, 10, "M.7 9.300L8 1.500l7.300 7.800") },
      { x: 1575, body: line(16, 20, "M2 5.500h8v9H2zM10 8.500l4-2v7l-4-2M2 2.500q4-3 9 0M2 17.500q4 3 9 0") },
      { x: 1602, body: icon(21, 22, "0 0 21 22", svg`<g fill="none" stroke="#fff" stroke-width="1.300"><path d="M1 4.500l18-3v17l-18-1.500z"/><path d="M6 9q2-3.500 7-1.500M13 4.500v4M14 11q-2 4-7 2M7 16v-3.500"/></g><circle cx="15.500" cy="17.500" r="4.600" fill="#f90"/>`) },
      { x: 1633, body: icon(19, 12, "0 0 19 12", svg`<path d="M.7.7h15.600v10.600H.7zM17 4h1.300v4H17" fill="none" stroke="#fff" stroke-width="1.300"/><path d="M2.500 2.500H9v7H2.500z" fill="#fff"/>`) },
      { x: 1664, body: icon(18, 18, "0 0 18 18", svg`<g fill="none" stroke="#cfd6d6" stroke-width="1.300"><path d="M1 17Q2 3 17 1.500M5 17Q6 7 17 5.500M9 17q1-6.500 8-7.500"/></g><circle cx="14.500" cy="15" r="2" fill="#fff"/>`) },
      { x: 1692, body: line(21, 18, "M.7 6h3L8 2v14l-4.300-4H.7zM11 6.500q2 2.500 0 5M14 4q4 5 0 10M17 1.500q5 7.500 0 15") },
      { x: 1725, cls: "tray", body: label("ENG", 29) },
      { x: 1767, cls: "clock", body: html`${label("09:00 PM", 60)}${label("05-04-2021", 76)}` },
      { x: 1848, body: html`` },
      { x: 1869, body: icon(32, 34, "0 0 32 34", svg`<path d="M0 2h20v15H9l-4 5v-5H0z" fill="#fff"/><path d="M3.500 6h13M3.500 9.500h13M3.500 13h9" stroke="#26373b" stroke-width="1.200"/><circle cx="19.500" cy="23" r="10.500" fill="#3c4548" stroke="#7d8a8c"/><text x="19.500" y="28" text-anchor="middle" font-size="14" font-family="Open Sans, sans-serif" fill="#fff">14</text>`) },
      { x: 1914, cls: "edge", body: html`` },
    ], 1920)}</div>`;
  }

  render() {
    return html`<div class="screen">
      <header class="top">${this.tabs()}${this.tools()}${this.bookmarks()}</header>
      <main class="view">
        <div class="page">
          <nav class="nav">${row([
            { x: 40, body: label("VIEW", 46) },
            { x: 124.5, body: label("SIGN IN", 66) },
            { x: 230, body: label("SIGN OUT", 86) },
          ], 400)}</nav>
          <div class="sheet"><div class="hero"><div class="card">${plans.map((p) => this.plan(p))}</div></div></div>
        </div>
        <div class="scroll">
          <div class="up">${icon(10, 5, "0 0 10 5", svg`<path d="M0 5l5-5 5 5z" fill="#a3a3a3"/>`)}</div>
          <div class="thumb"></div><div class="gap"></div>
          <div class="up">${icon(10, 5, "0 0 10 5", svg`<path d="M0 0l5 5 5-5z" fill="#505050"/>`)}</div>
        </div>
      </main>
      ${this.taskbar()}
    </div>`;
  }
}
